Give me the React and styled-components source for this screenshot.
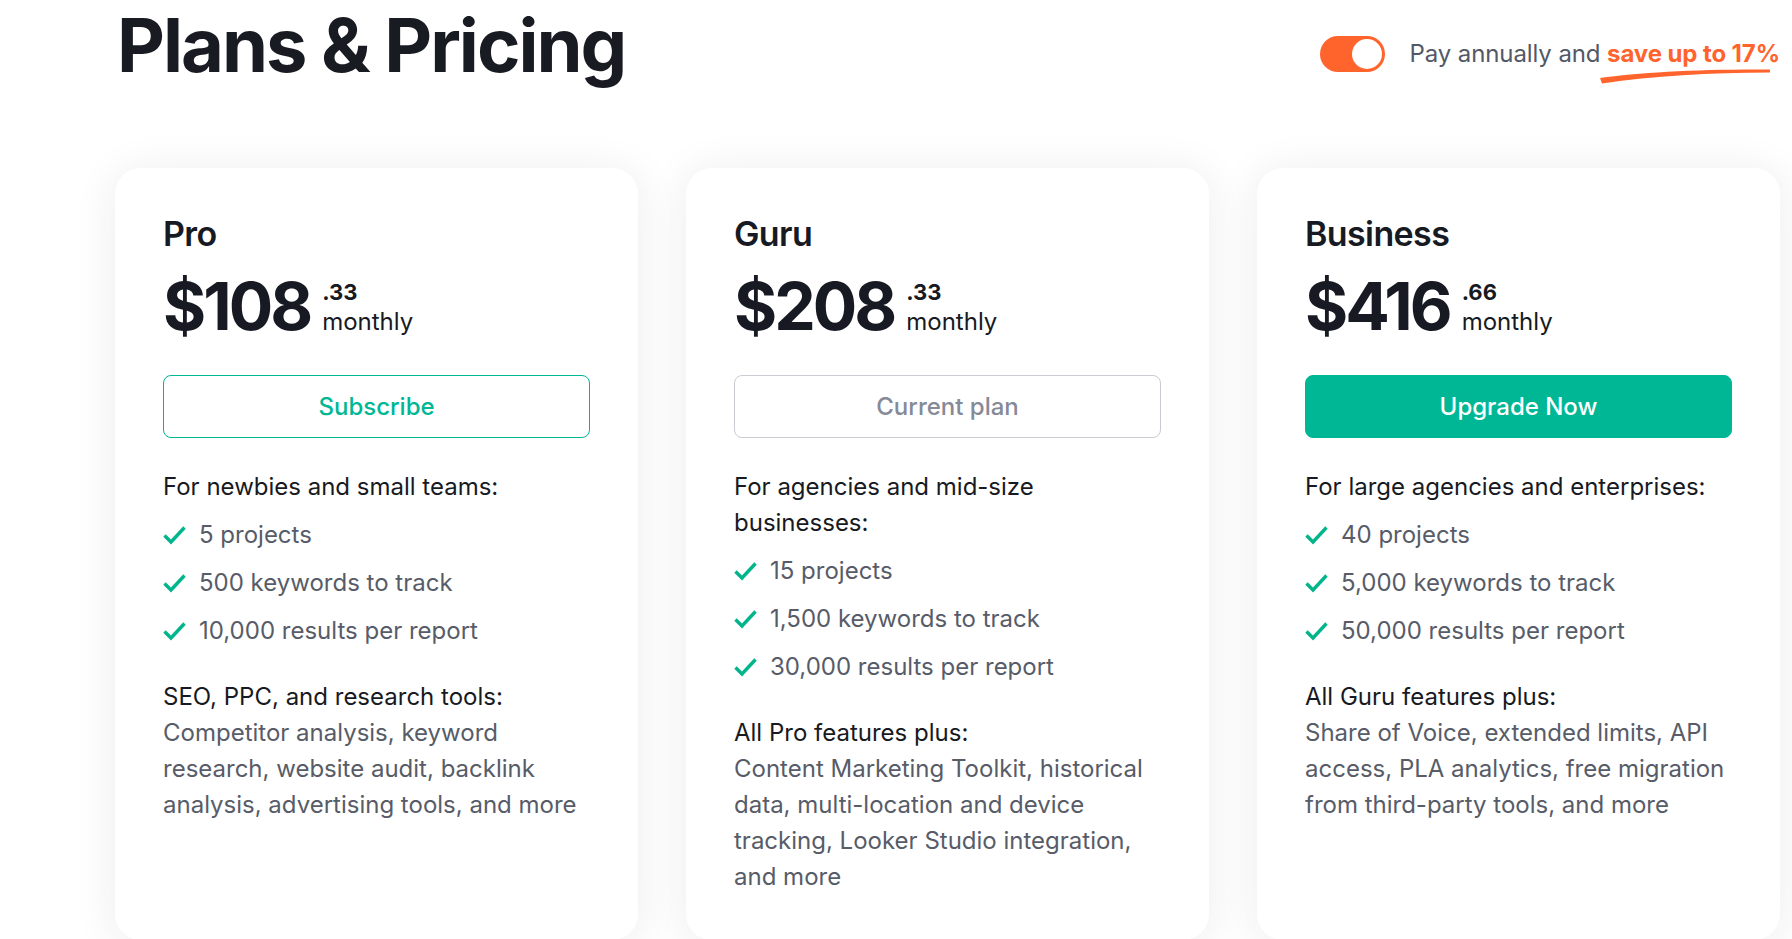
import React from "react";
import styled, { createGlobalStyle } from "styled-components";

const GlobalStyle = createGlobalStyle`
  html, body { margin: 0; padding: 0; background: #ffffff; }
  body {
    font-family: Inter, "Noto Sans", "Liberation Sans", sans-serif;
    color: #171a22;
    overflow: hidden;
    -webkit-font-smoothing: antialiased;
  }
  * { box-sizing: border-box; }
`;

const Page = styled.div`
  width: 1792px;
  height: 939px;
  overflow: hidden;
  padding: 0 12px 0 115px;
  display: flex;
  flex-direction: column;
`;

const Header = styled.header`
  flex: none;
  display: flex;
  justify-content: space-between;
  align-items: flex-start;
  height: 168px;
`;

const Title = styled.h1`
  margin: 0 0 0 2px;
  font-size: 74px;
  line-height: 90px;
  font-weight: 700;
  letter-spacing: -2px;
  color: #191b23;
`;

const BillingSwitch = styled.div`
  display: flex;
  align-items: center;
  gap: 25px;
  margin-top: 36px;
`;

const Track = styled.span`
  position: relative;
  display: inline-block;
  flex: none;
  width: 65px;
  height: 36px;
  border-radius: 18px;
  background: #ff642d;
`;

const Knob = styled.span`
  position: absolute;
  top: 3px;
  right: 3px;
  width: 30px;
  height: 30px;
  border-radius: 50%;
  background: #ffffff;
`;

const SwitchLabel = styled.span`
  font-size: 24px;
  line-height: 36px;
  letter-spacing: -0.1px;
  color: #535866;
  white-space: nowrap;
`;

const Save = styled.strong`
  position: relative;
  display: inline-block;
  font-weight: 700;
  color: #ff642d;
`;

const Swoosh = styled.svg`
  position: absolute;
  left: -8px;
  top: 30px;
  width: 172px;
  height: 18px;
`;

const Cards = styled.main`
  flex: none;
  display: grid;
  grid-template-columns: repeat(3, 523px);
  gap: 48px;
`;

const Card = styled.section`
  height: 772px;
  background: #ffffff;
  border-radius: 26px;
  box-shadow: 0 4px 44px rgba(30, 36, 52, 0.085);
  padding: 46px 48px 0 48px;
  display: flex;
  flex-direction: column;
`;

const PlanName = styled.h2`
  margin: 0;
  font-size: 34px;
  line-height: 40px;
  font-weight: 600;
  color: #171a22;
  letter-spacing: -0.6px;
`;

const PriceRow = styled.div`
  display: flex;
  align-items: flex-end;
  gap: 12px;
  margin-top: 19px;
`;

const Amount = styled.span`
  font-size: 66px;
  line-height: 66px;
  font-weight: 700;
  letter-spacing: -3px;
  color: #171a22;
`;

const PriceSide = styled.span`
  display: flex;
  flex-direction: column;
  padding-bottom: 4px;
`;

const Cents = styled.span`
  font-size: 22px;
  line-height: 22px;
  font-weight: 700;
  color: #171a22;
  margin-bottom: 6px;
`;

const Period = styled.span`
  font-size: 24px;
  line-height: 26px;
  color: #171a22;
`;

const Action = styled.button`
  margin-top: 36px;
  height: 63px;
  width: 100%;
  border-radius: 8px;
  font-family: inherit;
  font-size: 24px;
  font-weight: 500;
  cursor: pointer;
  border: 1px solid
    ${(p) => (p.$variant === "current" ? "#c9ccd2" : "#00b795")};
  background: ${(p) => (p.$variant === "primary" ? "#00b795" : "#ffffff")};
  color: ${(p) =>
    p.$variant === "primary"
      ? "#ffffff"
      : p.$variant === "current"
      ? "#858a96"
      : "#00b795"};
`;

const Audience = styled.p`
  margin: 31px 0 0 0;
  font-size: 24px;
  line-height: 36px;
  color: #171a22;
`;

const Features = styled.ul`
  list-style: none;
  margin: 12px 0 0 0;
  padding: 0;
  display: flex;
  flex-direction: column;
  gap: 12px;
`;

const Feature = styled.li`
  display: flex;
  align-items: center;
  gap: 13px;
  font-size: 24px;
  line-height: 36px;
  color: #575c68;
`;

const Extras = styled.div`
  margin-top: 30px;
  font-size: 24px;
  line-height: 36px;
`;

const ExtrasTitle = styled.div`
  color: #171a22;
`;

const ExtrasText = styled.div`
  color: #575c68;
`;

const Check = () => (
  <svg width="23" height="20" viewBox="0 0 23 20" fill="none">
    <path
      d="M1.5 10.5 L8 17 L21.5 2.5"
      stroke="#00b48c"
      strokeWidth="3.4"
      strokeLinejoin="miter"
    />
  </svg>
);

const plans = [
  {
    name: "Pro",
    amount: "$108",
    cents: ".33",
    variant: "outline",
    label: "Subscribe",
    audience: "For newbies and small teams:",
    features: ["5 projects", "500 keywords to track", "10,000 results per report"],
    extrasTitle: "SEO, PPC, and research tools:",
    extras:
      "Competitor analysis, keyword research, website audit, backlink analysis, advertising tools, and more",
  },
  {
    name: "Guru",
    amount: "$208",
    cents: ".33",
    variant: "current",
    label: "Current plan",
    audience: "For agencies and mid-size businesses:",
    features: ["15 projects", "1,500 keywords to track", "30,000 results per report"],
    extrasTitle: "All Pro features plus:",
    extras:
      "Content Marketing Toolkit, historical data, multi-location and device tracking, Looker Studio integration, and more",
  },
  {
    name: "Business",
    amount: "$416",
    cents: ".66",
    variant: "primary",
    label: "Upgrade Now",
    audience: "For large agencies and enterprises:",
    features: ["40 projects", "5,000 keywords to track", "50,000 results per report"],
    extrasTitle: "All Guru features plus:",
    extras:
      "Share of Voice, extended limits, API access, PLA analytics, free migration from third-party tools, and more",
  },
];

export default function App() {
  return (
    <>
      <GlobalStyle />
      <Page>
        <Header>
          <Title>Plans &amp; Pricing</Title>
          <BillingSwitch>
            <Track>
              <Knob />
            </Track>
            <SwitchLabel>
              Pay annually and{" "}
              <Save>
                save up to 17%
                <Swoosh viewBox="0 0 172 18" preserveAspectRatio="none">
                  <path
                    d="M1 12 C 40 6.5, 100 3, 171 3.5 L 171 6.5 C 110 6.5, 55 10, 3 17.5 Z"
                    fill="#ff642d"
                  />
                </Swoosh>
              </Save>
            </SwitchLabel>
          </BillingSwitch>
        </Header>
        <Cards>
          {plans.map((p) => (
            <Card key={p.name}>
              <PlanName>{p.name}</PlanName>
              <PriceRow>
                <Amount>{p.amount}</Amount>
                <PriceSide>
                  <Cents>{p.cents}</Cents>
                  <Period>monthly</Period>
                </PriceSide>
              </PriceRow>
              <Action $variant={p.variant}>{p.label}</Action>
              <Audience>{p.audience}</Audience>
              <Features>
                {p.features.map((f) => (
                  <Feature key={f}>
                    <Check />
                    {f}
                  </Feature>
                ))}
              </Features>
              <Extras>
                <ExtrasTitle>{p.extrasTitle}</ExtrasTitle>
                <ExtrasText>{p.extras}</ExtrasText>
              </Extras>
            </Card>
          ))}
        </Cards>
      </Page>
    </>
  );
}
